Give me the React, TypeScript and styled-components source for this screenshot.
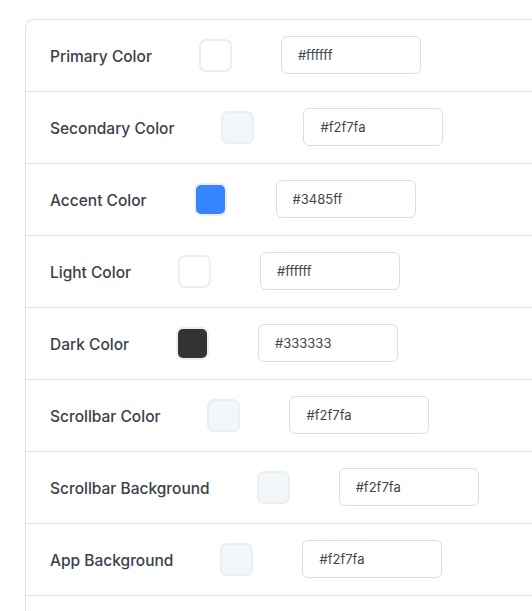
import React from 'react'
import styled, { createGlobalStyle } from 'styled-components'

const colors = [
  { label: 'Primary Color', value: '#ffffff' },
  { label: 'Secondary Color', value: '#f2f7fa' },
  { label: 'Accent Color', value: '#3485ff' },
  { label: 'Light Color', value: '#ffffff' },
  { label: 'Dark Color', value: '#333333' },
  { label: 'Scrollbar Color', value: '#f2f7fa' },
  { label: 'Scrollbar Background', value: '#f2f7fa' },
  { label: 'App Background', value: '#f2f7fa' },
]

const GlobalStyle = createGlobalStyle`
  html, body {
    margin: 0;
    padding: 0;
    background: #ffffff;
    overflow: hidden;
  }
  body {
    font-family: Inter, "Noto Sans", sans-serif;
    -webkit-font-smoothing: antialiased;
  }
`

const Page = styled.div`
  padding: 19px 0 0 25px;
`

const Card = styled.div`
  width: 620px;
  padding-bottom: 40px;
  border: 1px solid #e3e3e6;
  border-right: none;
  border-radius: 8px 0 0 0;
  background: #ffffff;
`

const Row = styled.div`
  display: flex;
  align-items: center;
  gap: 48px;
  height: 71px;
  padding: 0 24px;
  border-bottom: 1px solid #e3e3e6;
`

const Label = styled.span`
  margin-top: 1px;
  font-size: 15.5px;
  font-weight: 500;
  color: #3b404b;
`

const Swatch = styled.div<{ $color: string }>`
  width: 29px;
  height: 29px;
  margin: 0 1px 0 -1px;
  border: 2px solid #eceef1;
  border-radius: 7px;
  background: ${(p) => p.$color};
`

const HexInput = styled.input`
  box-sizing: border-box;
  width: 140px;
  height: 38px;
  margin-top: -1px;
  padding: 0 16px;
  border: 1px solid #dcdde3;
  border-radius: 6px;
  font-family: Inter, "Noto Sans", sans-serif;
  font-size: 13px;
  color: #41454d;
  background: #ffffff;
  outline: none;
`

const App: React.FC = () => (
  <>
    <GlobalStyle />
    <Page>
      <Card>
        {colors.map(({ label, value }) => (
          <Row key={label}>
            <Label>{label}</Label>
            <Swatch $color={value} />
            <HexInput value={value} readOnly />
          </Row>
        ))}
      </Card>
    </Page>
  </>
)

export default App
